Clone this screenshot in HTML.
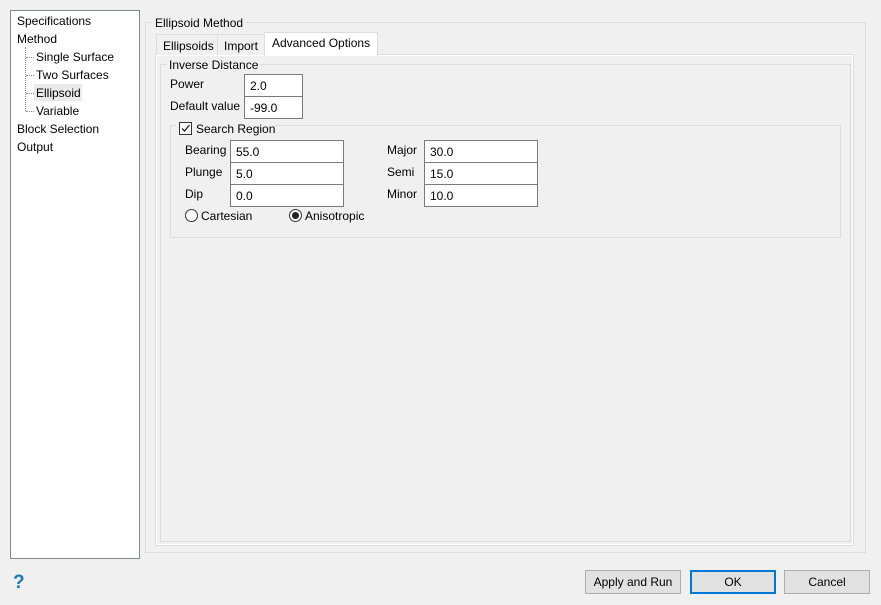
<!DOCTYPE html>
<html><head><style>
*{box-sizing:border-box;margin:0;padding:0}
body{width:881px;height:605px;background:#f0f0f0;font-family:"Liberation Sans",sans-serif;font-size:12px;color:#000;position:relative;overflow:hidden}
.a{position:absolute}
.t{position:absolute;white-space:nowrap;line-height:14px}
.box{position:absolute;background:#fff;border:1px solid #7a7a7a;height:23px;padding:4px 0 0 5px;line-height:14px}
.btn{position:absolute;top:570px;height:24px;background:#e1e1e1;border:1px solid #adadad;text-align:center;line-height:22px}
.dot{position:absolute;border-left:1px dotted #888}
</style></head><body>
<div class="a" style="left:10px;top:10px;width:130px;height:549px;background:#fff;border:1px solid #828790"></div>
<div class="t" style="left:17px;top:14px">Specifications</div>
<div class="t" style="left:17px;top:32px">Method</div>
<div class="dot" style="left:25px;top:47px;height:64px"></div>
<div class="a" style="left:26px;top:57px;width:8px;border-top:1px dotted #888"></div>
<div class="a" style="left:26px;top:75px;width:8px;border-top:1px dotted #888"></div>
<div class="a" style="left:26px;top:93px;width:8px;border-top:1px dotted #888"></div>
<div class="a" style="left:26px;top:111px;width:8px;border-top:1px dotted #888"></div>
<div class="t" style="left:36px;top:50px">Single Surface</div>
<div class="t" style="left:36px;top:68px">Two Surfaces</div>
<div class="a" style="left:34px;top:84px;width:48px;height:17px;background:#eaeaea"></div>
<div class="t" style="left:36px;top:86px">Ellipsoid</div>
<div class="t" style="left:36px;top:104px">Variable</div>
<div class="t" style="left:17px;top:122px">Block Selection</div>
<div class="t" style="left:17px;top:140px">Output</div>

<div class="a" style="left:145px;top:22px;width:721px;height:531px;border:1px solid #dcdcdc"></div>
<div class="t" style="left:152px;top:16px;background:#f0f0f0;padding:0 3px">Ellipsoid Method</div>

<div class="a" style="left:155px;top:54px;width:699px;height:492px;border:1px solid #dcdcdc;border-top-color:#dcdcdc;box-shadow:inset 1px 1px 0 #fff,inset -1px -1px 0 #fff"></div>
<div class="a" style="left:156px;top:34px;width:62px;height:21px;border:1px solid #dcdcdc;border-bottom:none;background:#f0f0f0"></div>
<div class="t" style="left:163px;top:39px">Ellipsoids</div>
<div class="a" style="left:217px;top:34px;width:48px;height:21px;border:1px solid #dcdcdc;border-bottom:none;background:#f0f0f0"></div>
<div class="t" style="left:224px;top:39px">Import</div>
<div class="a" style="left:264px;top:32px;width:114px;height:24px;border:1px solid #dcdcdc;border-bottom:none;background:#fff"></div>
<div class="t" style="left:272px;top:36px">Advanced Options</div>

<div class="a" style="left:160px;top:64px;width:691px;height:478px;border:1px solid #dcdcdc"></div>
<div class="t" style="left:167px;top:58px;background:#f0f0f0;padding:0 2px">Inverse Distance</div>
<div class="t" style="left:170px;top:77px">Power</div>
<div class="box" style="left:244px;top:74px;width:59px">2.0</div>
<div class="t" style="left:170px;top:99px">Default value</div>
<div class="box" style="left:244px;top:96px;width:59px">-99.0</div>

<div class="a" style="left:170px;top:125px;width:671px;height:113px;border:1px solid #dcdcdc"></div>
<div class="a" style="left:176px;top:120px;width:98px;height:16px;background:#f0f0f0"></div>
<div class="a" style="left:179px;top:122px;width:13px;height:13px;border:1px solid #333;background:#fff"></div>
<svg class="a" style="left:180px;top:123px" width="11" height="11"><path d="M2 5.5 L4.5 8 L9.5 2" stroke="#222" stroke-width="1.3" fill="none"/></svg>
<div class="t" style="left:196px;top:122px">Search Region</div>

<div class="t" style="left:185px;top:143px">Bearing</div>
<div class="box" style="left:230px;top:140px;width:114px">55.0</div>
<div class="t" style="left:185px;top:165px">Plunge</div>
<div class="box" style="left:230px;top:162px;width:114px">5.0</div>
<div class="t" style="left:185px;top:187px">Dip</div>
<div class="box" style="left:230px;top:184px;width:114px">0.0</div>
<div class="t" style="left:387px;top:143px">Major</div>
<div class="box" style="left:424px;top:140px;width:114px">30.0</div>
<div class="t" style="left:387px;top:165px">Semi</div>
<div class="box" style="left:424px;top:162px;width:114px">15.0</div>
<div class="t" style="left:387px;top:187px">Minor</div>
<div class="box" style="left:424px;top:184px;width:114px">10.0</div>

<div class="a" style="left:185px;top:209px;width:13px;height:13px;border:1px solid #333;border-radius:50%;background:#fff"></div>
<div class="t" style="left:201px;top:209px">Cartesian</div>
<div class="a" style="left:289px;top:209px;width:13px;height:13px;border:1px solid #333;border-radius:50%;background:#fff"></div>
<div class="a" style="left:292px;top:212px;width:7px;height:7px;border-radius:50%;background:#222"></div>
<div class="t" style="left:305px;top:209px">Anisotropic</div>

<div class="t" style="left:13px;top:573px;font-size:19px;font-weight:bold;color:#1a78b4;line-height:20px">?</div>
<div class="btn" style="left:585px;width:96px">Apply and Run</div>
<div class="btn" style="left:690px;width:86px;border:2px solid #0078d7;line-height:20px">OK</div>
<div class="btn" style="left:784px;width:86px">Cancel</div>
</body></html>
